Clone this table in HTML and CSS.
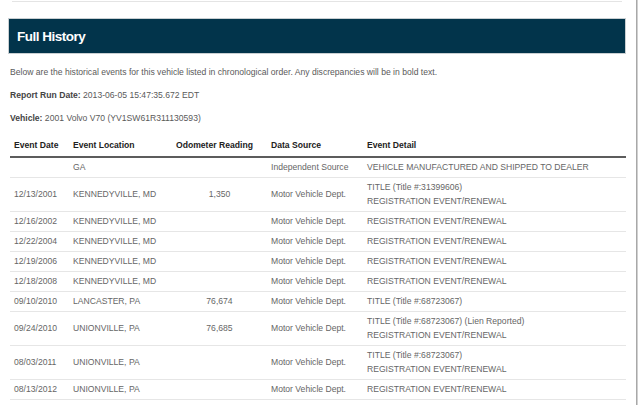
FILE: index.html
```html
<!DOCTYPE html>
<html>
<head>
<meta charset="utf-8">
<link rel="stylesheet" href="styles.css">
</head>
<body>
<div class="window">
  <div class="page">
    <div class="rule"></div>
    <div class="section-head"><h2 class="section-title">Full History</h2></div>
    <p class="text intro">Below are the historical events for this vehicle listed in chronological order. Any discrepancies will be in bold text.</p>
    <p class="text"><b>Report Run Date:</b> 2013-06-05 15:47:35.672 EDT</p>
    <p class="text"><b>Vehicle:</b> 2001 Volvo V70 (YV1SW61R311130593)</p>
    <table class="history">
      <colgroup>
        <col class="c-date"><col class="c-loc"><col class="c-odo"><col class="c-src"><col class="c-detail">
      </colgroup>
      <thead>
        <tr><th>Event Date</th><th>Event Location</th><th>Odometer Reading</th><th>Data Source</th><th>Event Detail</th></tr>
      </thead>
      <tbody>
        <tr><td></td><td>GA</td><td class="odo"></td><td>Independent Source</td><td>VEHICLE MANUFACTURED AND SHIPPED TO DEALER</td></tr>
        <tr class="double"><td>12/13/2001</td><td>KENNEDYVILLE, MD</td><td class="odo">1,350</td><td>Motor Vehicle Dept.</td><td>TITLE (Title #:31399606)<br>REGISTRATION EVENT/RENEWAL</td></tr>
        <tr><td>12/16/2002</td><td>KENNEDYVILLE, MD</td><td class="odo"></td><td>Motor Vehicle Dept.</td><td>REGISTRATION EVENT/RENEWAL</td></tr>
        <tr><td>12/22/2004</td><td>KENNEDYVILLE, MD</td><td class="odo"></td><td>Motor Vehicle Dept.</td><td>REGISTRATION EVENT/RENEWAL</td></tr>
        <tr><td>12/19/2006</td><td>KENNEDYVILLE, MD</td><td class="odo"></td><td>Motor Vehicle Dept.</td><td>REGISTRATION EVENT/RENEWAL</td></tr>
        <tr><td>12/18/2008</td><td>KENNEDYVILLE, MD</td><td class="odo"></td><td>Motor Vehicle Dept.</td><td>REGISTRATION EVENT/RENEWAL</td></tr>
        <tr><td>09/10/2010</td><td>LANCASTER, PA</td><td class="odo">76,674</td><td>Motor Vehicle Dept.</td><td>TITLE (Title #:68723067)</td></tr>
        <tr class="double"><td>09/24/2010</td><td>UNIONVILLE, PA</td><td class="odo">76,685</td><td>Motor Vehicle Dept.</td><td>TITLE (Title #:68723067) (Lien Reported)<br>REGISTRATION EVENT/RENEWAL</td></tr>
        <tr class="double"><td>08/03/2011</td><td>UNIONVILLE, PA</td><td class="odo"></td><td>Motor Vehicle Dept.</td><td>TITLE (Title #:68723067)<br>REGISTRATION EVENT/RENEWAL</td></tr>
        <tr><td>08/13/2012</td><td>UNIONVILLE, PA</td><td class="odo"></td><td>Motor Vehicle Dept.</td><td>REGISTRATION EVENT/RENEWAL</td></tr>
      </tbody>
    </table>
  </div>
  <div class="edge"></div>
</div>
</body>
</html>
```

FILE: styles.css
```css
html, body {
  margin: 0;
  padding: 0;
  background: #ffffff;
}
body {
  font-family: "Liberation Sans", Arial, Helvetica, sans-serif;
  font-size: 8.6px;
  color: #555;
}
.window {
  display: flex;
  height: 405px;
  overflow: hidden;
}
.page {
  flex: 0 0 637px;
  width: 637px;
  padding: 0 10px 0 8px;
  box-sizing: border-box;
  border-right: 1px solid #a8a8a8;
}
.edge {
  flex: 1;
  border-left: 1px solid #d0d0d0;
}
.rule {
  margin: 1px 4px 0 4px;
  border-top: 1px solid #e4e4e4;
}
.section-head {
  margin-top: 16px;
  border: 1px solid #c9cfd2;
  background: #02344b;
  height: 34px;
  display: flex;
  align-items: center;
  padding-left: 8px;
}
.section-title {
  margin: 0;
  color: #fff;
  font-size: 13.5px;
  font-weight: bold;
  letter-spacing: -0.5px;
  line-height: 16px;
  padding-top: 1px;
}
.text {
  margin: 0 0 10px 2px;
  line-height: 13px;
  color: #5a5a5a;
}
.text b {
  color: #444;
}
.intro {
  margin-top: 12px;
}
.history {
  margin: 5px 0 0 2px;
  width: 616px;
  border-collapse: collapse;
  table-layout: fixed;
}
.c-date { width: 59px; }
.c-loc { width: 103px; }
.c-odo { width: 95px; }
.c-src { width: 96px; }
.history th {
  text-align: left;
  font-weight: bold;
  color: #222;
  padding: 4px 4px 4px;
  line-height: 13px;
  border-bottom: 2px solid #5c5c5c;
  white-space: nowrap;
}
.history td {
  padding: 3px 4px;
  line-height: 13px;
  border-bottom: 1px solid #e6e6e6;
  color: #666;
  vertical-align: middle;
  white-space: nowrap;
}
.history tr.double td {
  line-height: 13.5px;
}
.history td.odo {
  text-align: center;
}
```
